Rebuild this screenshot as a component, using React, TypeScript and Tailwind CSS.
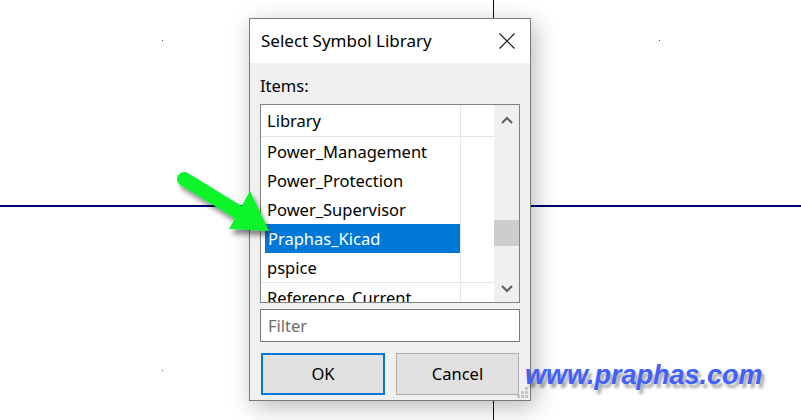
import React from "react";

const ui = { fontFamily: '"Noto Sans", "Open Sans", sans-serif' };

function Chevron({ up }: { up?: boolean }) {
  return (
    <svg width="12" height="8" viewBox="0 0 12 8">
      <path
        d={up ? "M1 7 L6 2 L11 7" : "M1 1 L6 6 L11 1"}
        fill="none"
        stroke="#606060"
        strokeWidth="2.2"
      />
    </svg>
  );
}

function Row({
  label,
  selected,
  bordered,
}: {
  label: string;
  selected?: boolean;
  bordered?: boolean;
}) {
  return (
    <div
      className={`flex shrink-0 ${bordered ? "h-[30px] border-b border-[#e5e5e5]" : "h-[29px]"}`}
    >
      <div className="w-[199px] h-[29px]">
        {selected ? (
          <div className="ml-[4px] h-full pl-[3px] bg-[#0078d7] text-white leading-[29px] whitespace-nowrap">
            {label}
          </div>
        ) : (
          <div className="pl-[6px] leading-[29px] text-black whitespace-nowrap">{label}</div>
        )}
      </div>
      <div className="flex-1 border-l border-[#e5e5e5]" />
    </div>
  );
}

export default function App() {
  return (
    <div className="relative w-[801px] h-[420px] bg-white overflow-hidden" style={ui}>
      {/* schematic canvas */}
      <div className="absolute left-0 top-[205px] w-full h-[2px] bg-[#00006e]" />
      <div className="absolute left-[493px] top-0 w-[1px] h-full bg-[#00006e]" />
      <div className="absolute left-[162px] top-[40px] w-[1px] h-[1px] bg-[#555]" />
      <div className="absolute left-[659px] top-[40px] w-[1px] h-[1px] bg-[#555]" />
      <div className="absolute left-[162px] top-[370px] w-[1px] h-[1px] bg-[#555]" />
      <div className="absolute left-[659px] top-[370px] w-[1px] h-[1px] bg-[#555]" />

      {/* dialog */}
      <div className="absolute left-[249px] top-[18px] w-[282px] h-[383px] border border-[#7a7a7a] bg-[#f0f0f0] flex flex-col shadow-[4px_6px_22px_rgba(0,0,0,0.28)]">
        <div className="h-[44px] shrink-0 bg-white flex items-center justify-between pl-[11px] pr-[15px]">
          <span className="text-[17px] text-black leading-[44px]">Select Symbol Library</span>
          <svg width="16" height="16" viewBox="0 0 16 16">
            <path d="M0.5 0.5 L15.5 15.5 M15.5 0.5 L0.5 15.5" stroke="#111" strokeWidth="1.1" />
          </svg>
        </div>
        <div className="flex-1 flex flex-col px-[10px] pt-[12px] text-[16.5px]">
          <div className="leading-[22px] text-black">Items:</div>
          <div className="mt-[7px] h-[199px] border border-[#828282] bg-white flex">
            <div className="flex-1 flex flex-col overflow-hidden">
              <div className="flex h-[32px] shrink-0 border-b border-[#e5e5e5]">
                <div className="w-[199px] pl-[6px] leading-[31px] text-black">Library</div>
                <div className="flex-1 border-l border-[#e5e5e5]" />
              </div>
              <Row label="Power_Management" />
              <Row label="Power_Protection" />
              <Row label="Power_Supervisor" />
              <Row label="Praphas_Kicad" selected />
              <Row label="pspice" bordered />
              <Row label="Reference_Current" />
            </div>
            <div className="w-[25px] bg-[#f0f0f0] flex flex-col">
              <div className="h-[30px] flex items-center justify-center">
                <Chevron up />
              </div>
              <div className="flex-1">
                <div className="mt-[85px] h-[26px] bg-[#cdcdcd]" />
              </div>
              <div className="h-[27px] flex items-center justify-center">
                <Chevron />
              </div>
            </div>
          </div>
          <div className="mt-[6px] h-[33px] border border-[#7a7a7a] bg-white pl-[7px] leading-[31px] text-[#6d6d6d]">
            Filter
          </div>
          <div className="mt-[11px] flex gap-[11px]">
            <button className="ml-[1px] w-[124px] h-[42px] border-2 border-[#0078d7] bg-[#e1e1e1] text-black text-[16.5px]">
              OK
            </button>
            <button className="w-[123px] h-[42px] border border-[#adadad] bg-[#e1e1e1] text-black text-[16.5px]">
              Cancel
            </button>
          </div>
        </div>
        <svg className="absolute right-[1px] bottom-[1px]" width="12" height="12" viewBox="0 0 12 12">
          <rect x="8" y="0" width="3" height="3" fill="#c4c4c4" />
          <rect x="4" y="4" width="3" height="3" fill="#c4c4c4" />
          <rect x="8" y="4" width="3" height="3" fill="#c4c4c4" />
          <rect x="0" y="8" width="3" height="3" fill="#c4c4c4" />
          <rect x="4" y="8" width="3" height="3" fill="#c4c4c4" />
          <rect x="8" y="8" width="3" height="3" fill="#c4c4c4" />
        </svg>
      </div>

      {/* green arrow */}
      <svg className="absolute left-0 top-0 pointer-events-none" width="801" height="420">
        <defs>
          <filter id="sh" x="-20%" y="-20%" width="160%" height="160%">
            <feGaussianBlur in="SourceAlpha" stdDeviation="2.5" />
            <feOffset dx="3" dy="5" result="b" />
            <feComponentTransfer>
              <feFuncA type="linear" slope="0.45" />
            </feComponentTransfer>
            <feMerge>
              <feMergeNode />
              <feMergeNode in="SourceGraphic" />
            </feMerge>
          </filter>
        </defs>
        <g filter="url(#sh)">
          <line x1="184" y1="179" x2="238" y2="212" stroke="#07f52b" strokeWidth="14" strokeLinecap="round" />
          <polygon points="250,191 229,229 269,231" fill="#07f52b" />
        </g>
      </svg>

      {/* watermark */}
      <div
        className="absolute left-[525px] top-[362px] text-[27px] leading-none font-bold italic text-[#4260fb] whitespace-nowrap"
        style={{
          fontFamily: '"Liberation Sans", Arial, sans-serif',
          textShadow: "3px 4px 3px rgba(0,0,0,0.35)",
        }}
      >
        www.praphas.com
      </div>
    </div>
  );
}
